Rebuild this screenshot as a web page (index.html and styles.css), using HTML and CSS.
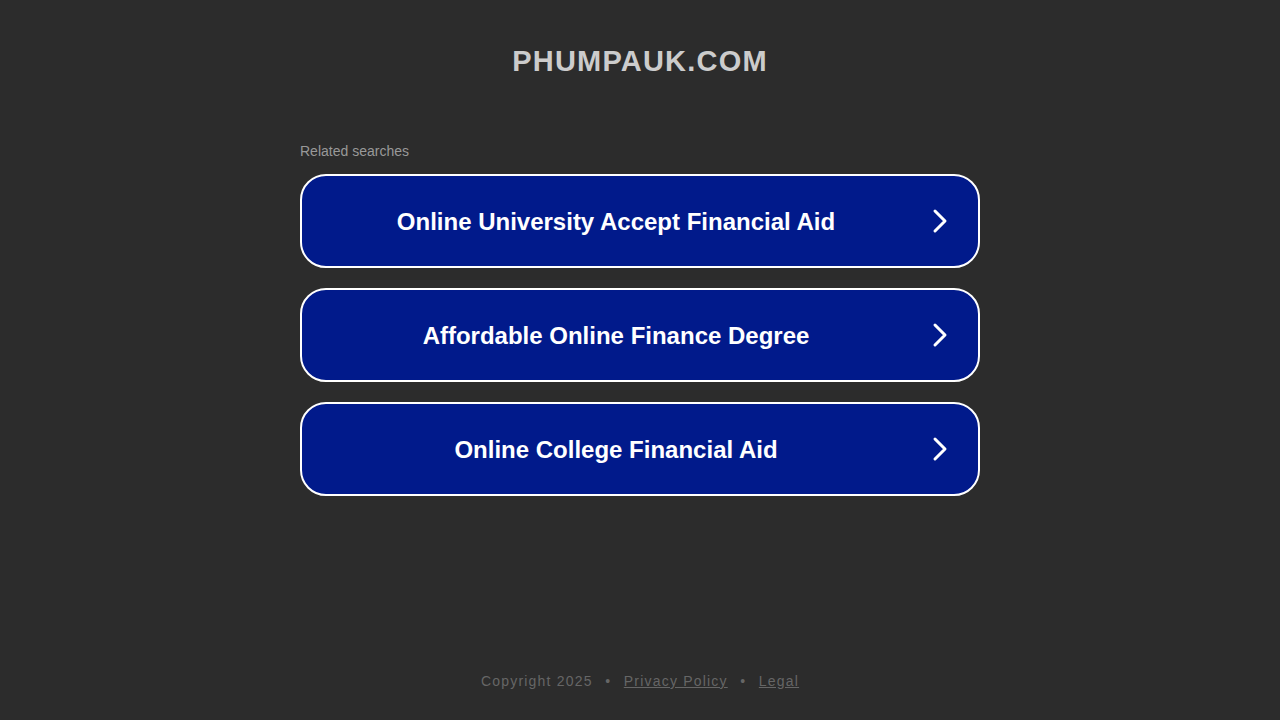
FILE: index.html
```html
<!DOCTYPE html>
<html>
<head>
<meta charset="utf-8">
<link rel="stylesheet" href="styles.css">
</head>
<body>
<div class="page">
  <header class="header"><h1 class="domain">PHUMPAUK.COM</h1></header>
  <main class="main">
    <div class="related">Related searches</div>
    <div class="list">
      <a class="item" href="#"><span class="label">Online University Accept Financial Aid</span><span class="arrow"><svg width="20" height="28" viewBox="0 0 20 28"><path d="M5 4 L15 14 L5 24" fill="none" stroke="#fff" stroke-width="3" stroke-linecap="round" stroke-linejoin="round"/></svg></span></a>
      <a class="item" href="#"><span class="label">Affordable Online Finance Degree</span><span class="arrow"><svg width="20" height="28" viewBox="0 0 20 28"><path d="M5 4 L15 14 L5 24" fill="none" stroke="#fff" stroke-width="3" stroke-linecap="round" stroke-linejoin="round"/></svg></span></a>
      <a class="item" href="#"><span class="label">Online College Financial Aid</span><span class="arrow"><svg width="20" height="28" viewBox="0 0 20 28"><path d="M5 4 L15 14 L5 24" fill="none" stroke="#fff" stroke-width="3" stroke-linecap="round" stroke-linejoin="round"/></svg></span></a>
    </div>
  </main>
  <footer class="footer">
    <span>Copyright 2025</span><span class="dot">•</span><a href="#">Privacy Policy</a><span class="dot">•</span><a href="#">Legal</a>
  </footer>
</div>
</body>
</html>
```
FILE: styles.css
```css
html, body {
  margin: 0;
  padding: 0;
  background: #2c2c2c;
  font-family: Arial, "Liberation Sans", Helvetica, sans-serif;
}
.page {
  height: 720px;
  display: flex;
  flex-direction: column;
  align-items: center;
}
.header {
  padding-top: 43px;
  height: 100px;
  box-sizing: border-box;
}
.domain {
  margin: 0;
  font-size: 29px;
  line-height: 36px;
  font-weight: bold;
  color: #cccccc;
  letter-spacing: 1.2px;
}
.main {
  width: 680px;
  padding-top: 42px;
  flex: 1;
}
.related {
  font-size: 14px;
  line-height: 18px;
  color: #999999;
  margin-bottom: 14px;
}
.list {
  display: flex;
  flex-direction: column;
  gap: 20px;
}
.item {
  display: flex;
  align-items: center;
  height: 94px;
  box-sizing: border-box;
  border: 2px solid #ffffff;
  border-radius: 26px;
  background: #011a8b;
  text-decoration: none;
  padding-right: 28px;
  padding-top: 1px;
}
.label {
  flex: 1;
  text-align: center;
  color: #ffffff;
  font-size: 24px;
  font-weight: bold;
}
.arrow {
  width: 20px;
  height: 28px;
  display: flex;
  margin-top: -1px;
}
.footer {
  height: 70px;
  font-size: 14px;
  letter-spacing: 1.2px;
  color: #666666;
  display: flex;
  padding-top: 23px;
  box-sizing: border-box;
}
.footer a {
  color: #666666;
}
.dot {
  margin: 0 12.5px;
}
```
